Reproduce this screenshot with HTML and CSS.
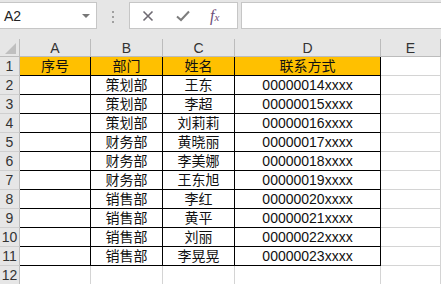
FILE: index.html
```html
<!DOCTYPE html>
<html lang="zh">
<head>
    <title>表格</title>
    <link rel="stylesheet" href="styles.css">
</head>
<body>

    <div class="toolbar">
        <div class="namebox">
            <span class="ref">A2</span>
            <span class="caret"></span>
        </div>
        <div class="grip"><i></i><i></i><i></i></div>
        <div class="buttons">
            <svg class="icon" width="12" height="12" viewBox="0 0 12 12">
                <path d="M1.5 1.5 L10.5 10.5 M10.5 1.5 L1.5 10.5" stroke="#6e6a72" stroke-width="1.6" fill="none"/>
            </svg>
            <svg class="icon" width="14" height="12" viewBox="0 0 14 12">
                <path d="M1 6.5 L5 10 L13 1.5" stroke="#7d7d7d" stroke-width="2" fill="none"/>
            </svg>
            <span class="fx">f<small>x</small></span>
        </div>
        <div class="formula"></div>
    </div>

    <div class="sheet">
        <div class="corner"><span class="tri"></span></div>
        <div class="colhead">A</div>
        <div class="colhead">B</div>
        <div class="colhead">C</div>
        <div class="colhead">D</div>
        <div class="colhead">E</div>

        <div class="rowhead">1</div>
        <div class="cell box head">序号</div>
        <div class="cell box head">部门</div>
        <div class="cell box head">姓名</div>
        <div class="cell box head">联系方式</div>
        <div class="cell"></div>

        <div class="rowhead">2</div>
        <div class="cell box"></div>
        <div class="cell box">策划部</div>
        <div class="cell box">王东</div>
        <div class="cell box">00000014xxxx</div>
        <div class="cell"></div>

        <div class="rowhead">3</div>
        <div class="cell box"></div>
        <div class="cell box">策划部</div>
        <div class="cell box">李超</div>
        <div class="cell box">00000015xxxx</div>
        <div class="cell"></div>

        <div class="rowhead">4</div>
        <div class="cell box"></div>
        <div class="cell box">策划部</div>
        <div class="cell box">刘莉莉</div>
        <div class="cell box">00000016xxxx</div>
        <div class="cell"></div>

        <div class="rowhead">5</div>
        <div class="cell box"></div>
        <div class="cell box">财务部</div>
        <div class="cell box">黄晓丽</div>
        <div class="cell box">00000017xxxx</div>
        <div class="cell"></div>

        <div class="rowhead">6</div>
        <div class="cell box"></div>
        <div class="cell box">财务部</div>
        <div class="cell box">李美娜</div>
        <div class="cell box">00000018xxxx</div>
        <div class="cell"></div>

        <div class="rowhead">7</div>
        <div class="cell box"></div>
        <div class="cell box">财务部</div>
        <div class="cell box">王东旭</div>
        <div class="cell box">00000019xxxx</div>
        <div class="cell"></div>

        <div class="rowhead">8</div>
        <div class="cell box"></div>
        <div class="cell box">销售部</div>
        <div class="cell box">李红</div>
        <div class="cell box">00000020xxxx</div>
        <div class="cell"></div>

        <div class="rowhead">9</div>
        <div class="cell box"></div>
        <div class="cell box">销售部</div>
        <div class="cell box">黄平</div>
        <div class="cell box">00000021xxxx</div>
        <div class="cell"></div>

        <div class="rowhead">10</div>
        <div class="cell box"></div>
        <div class="cell box">销售部</div>
        <div class="cell box">刘丽</div>
        <div class="cell box">00000022xxxx</div>
        <div class="cell"></div>

        <div class="rowhead">11</div>
        <div class="cell box"></div>
        <div class="cell box">销售部</div>
        <div class="cell box">李晃晃</div>
        <div class="cell box">00000023xxxx</div>
        <div class="cell"></div>

        <div class="rowhead">12</div>
        <div class="cell"></div>
        <div class="cell"></div>
        <div class="cell"></div>
        <div class="cell"></div>
        <div class="cell"></div>
    </div>

</body>
</html>
```

FILE: styles.css
```css
body {
    margin: 0;
    background-color: #fff;
    font-family: "Liberation Sans", "Noto Sans CJK SC", sans-serif;
    overflow: hidden;
}

.toolbar {
    display: flex;
    align-items: flex-start;
    height: 39px;
    padding-top: 2px;
    box-sizing: border-box;
    background-color: #e6e6e6;
}

.namebox {
    display: flex;
    align-items: center;
    justify-content: space-between;
    width: 98px;
    height: 27px;
    margin-left: -1px;
    padding: 0 6px 0 4px;
    box-sizing: border-box;
    background-color: #fff;
    border: 1px solid #c6c6c6;
}

.ref {
    font-size: 14px;
    color: #222;
}

.caret {
    width: 0;
    height: 0;
    border-left: 4px solid transparent;
    border-right: 4px solid transparent;
    border-top: 4px solid #777;
}

.grip {
    display: flex;
    flex-direction: column;
    gap: 3px;
    margin: 9px 15px 0 15px;
}

.grip i {
    display: block;
    width: 2px;
    height: 2px;
    background-color: #a0a0a0;
}

.buttons {
    display: flex;
    align-items: center;
    width: 109px;
    height: 27px;
    padding-left: 12px;
    gap: 22px;
    box-sizing: border-box;
    background-color: #fff;
    border: 1px solid #c6c6c6;
}

.fx {
    font-family: "Liberation Serif", serif;
    font-style: italic;
    font-size: 16px;
    color: #6d4f7a;
    margin-left: -2px;
}

.fx small {
    font-size: 11px;
}

.formula {
    flex: 1;
    height: 27px;
    margin-left: 3px;
    margin-right: -1px;
    box-sizing: border-box;
    background-color: #fff;
    border: 1px solid #c6c6c6;
}

.sheet {
    display: grid;
    grid-template-columns: 20px 71px 72px 72px 146px 1fr;
    grid-template-rows: 18px;
    grid-auto-rows: 19px;
}

.sheet > div {
    box-sizing: border-box;
    border-right: 1px solid #d4d4d4;
    border-bottom: 1px solid #d4d4d4;
    font-size: 14px;
    line-height: 18px;
    text-align: center;
    white-space: nowrap;
    overflow: hidden;
}

.corner {
    position: relative;
    background-color: #e6e6e6;
}

.sheet > .corner,
.sheet > .colhead {
    border-right-color: #bcbcbc;
    border-bottom-color: #bcbcbc;
}

.tri {
    position: absolute;
    right: 3px;
    bottom: 2px;
    width: 0;
    height: 0;
    border-left: 11px solid transparent;
    border-bottom: 11px solid #bfbfbf;
}

.colhead {
    background-color: #e6e6e6;
    color: #333;
}

.sheet > .rowhead {
    background-color: #e6e6e6;
    border-right-color: #bcbcbc;
    border-bottom-color: #cfcfcf;
    color: #333;
}

.cell {
    color: #111;
}

.sheet > .box {
    border-right-color: #000;
    border-bottom-color: #000;
}

.head {
    background-color: #ffc000;
}
```
